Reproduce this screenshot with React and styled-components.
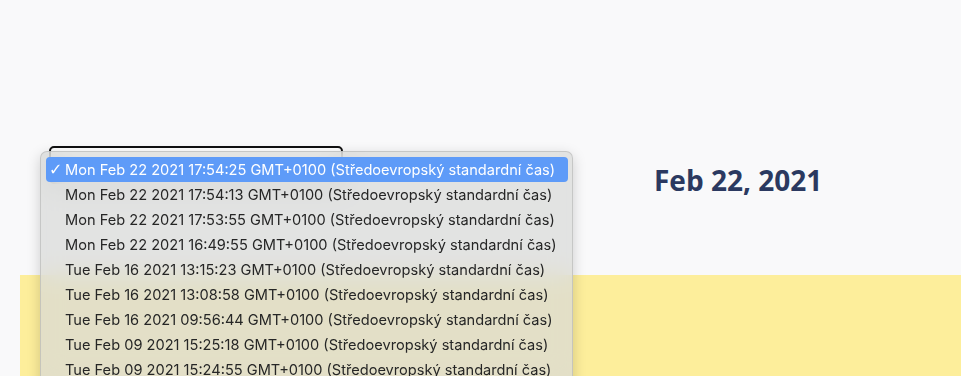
import React from "react";
import styled, { createGlobalStyle } from "styled-components";

const Global = createGlobalStyle`
  html, body { margin: 0; padding: 0; background: #f9f9fa; }
  body { font-family: "Open Sans", "Liberation Sans", sans-serif; overflow: hidden; }
`;

const Page = styled.div`
  position: relative;
  width: 961px;
  height: 376px;
  display: flex;
  flex-direction: column;
  overflow: hidden;
`;

const Top = styled.div`
  height: 275px;
  display: flex;
  align-items: flex-start;
  padding: 146px 0 0 49px;
  box-sizing: border-box;
`;

const SelectBox = styled.div`
  width: 294px;
  height: 38px;
  box-sizing: border-box;
  border: 2px solid #111;
  border-radius: 5px;
  background: #fff;
`;

const DateTitle = styled.h2`
  margin: 14px 0 0 311px;
  font-family: "Open Sans", sans-serif;
  font-weight: 700;
  font-size: 28px;
  line-height: 40px;
  color: #2b3960;
`;

const Band = styled.div`
  flex: 1;
  margin-left: 20px;
  background: #fdee9b;
`;

const Menu = styled.ul`
  position: absolute;
  left: 40px;
  top: 151px;
  width: 533px;
  box-sizing: border-box;
  margin: 0;
  padding: 5px 4px 5px 5px;
  list-style: none;
  border-radius: 7px;
  background: rgba(216, 218, 216, 0.72);
  backdrop-filter: blur(12px);
  border: 1px solid rgba(180, 180, 180, 0.6);
  box-shadow: 0 4px 14px rgba(0, 0, 0, 0.18);
`;

const Item = styled.li`
  position: relative;
  height: 25px;
  display: flex;
  align-items: center;
  padding-left: 19px;
  border-radius: 4px;
  font-family: Inter, "Liberation Sans", sans-serif;
  font-size: 14.6px;
  color: ${(p) => (p.$active ? "#ffffff" : "#262626")};
  background: ${(p) => (p.$active ? "#5e9bf8" : "transparent")};
  white-space: nowrap;
`;

const Check = styled.span`
  position: absolute;
  left: 3px;
  top: 0;
  height: 25px;
  display: flex;
  align-items: center;
  font-family: "DejaVu Sans", sans-serif;
  font-size: 16px;
`;

const options = [
  "Mon Feb 22 2021 17:54:25 GMT+0100 (Středoevropský standardní čas)",
  "Mon Feb 22 2021 17:54:13 GMT+0100 (Středoevropský standardní čas)",
  "Mon Feb 22 2021 17:53:55 GMT+0100 (Středoevropský standardní čas)",
  "Mon Feb 22 2021 16:49:55 GMT+0100 (Středoevropský standardní čas)",
  "Tue Feb 16 2021 13:15:23 GMT+0100 (Středoevropský standardní čas)",
  "Tue Feb 16 2021 13:08:58 GMT+0100 (Středoevropský standardní čas)",
  "Tue Feb 16 2021 09:56:44 GMT+0100 (Středoevropský standardní čas)",
  "Tue Feb 09 2021 15:25:18 GMT+0100 (Středoevropský standardní čas)",
  "Tue Feb 09 2021 15:24:55 GMT+0100 (Středoevropský standardní čas)",
];

export default function App() {
  return (
    <>
      <Global />
      <Page>
        <Top>
          <SelectBox />
          <DateTitle>Feb 22, 2021</DateTitle>
        </Top>
        <Band />
        <Menu>
          {options.map((o, i) => (
            <Item key={i} $active={i === 0}>
              {i === 0 && <Check>✓</Check>}
              {o}
            </Item>
          ))}
        </Menu>
      </Page>
    </>
  );
}
